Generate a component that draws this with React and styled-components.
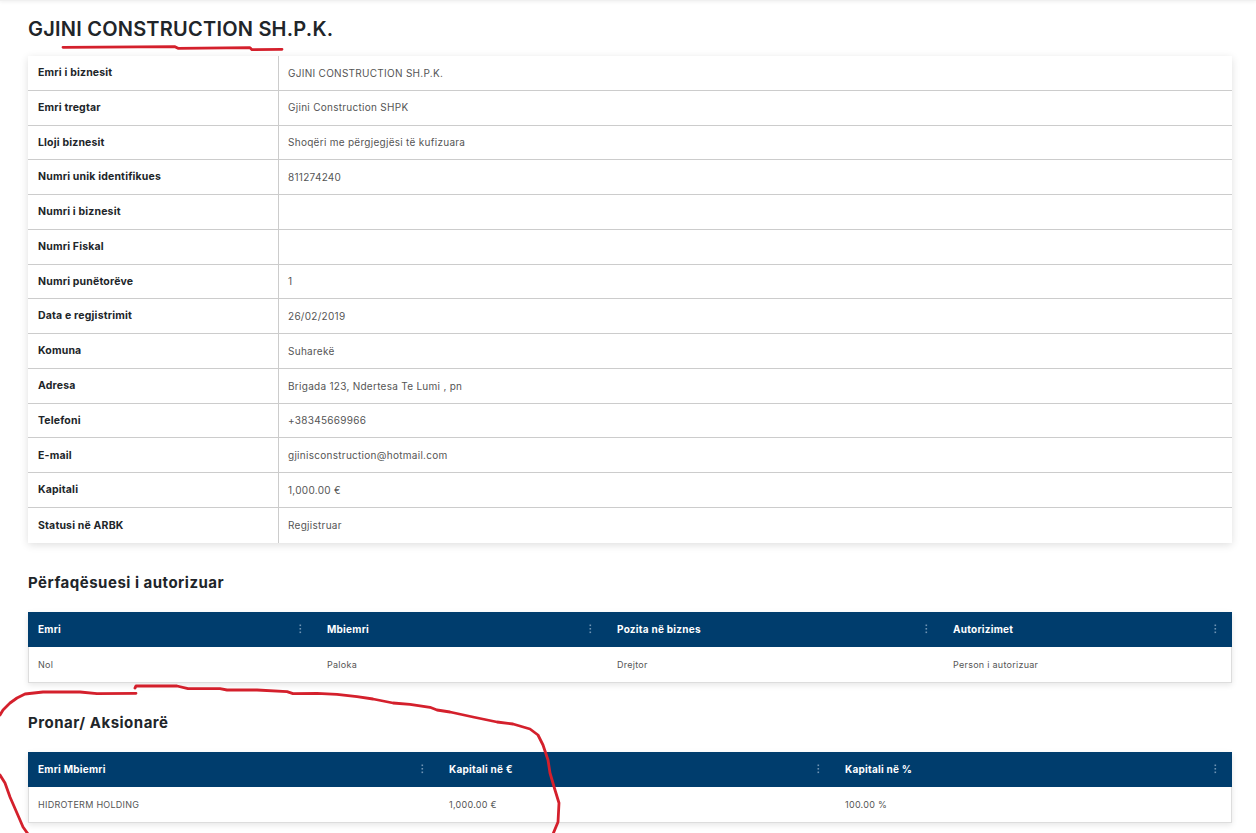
import styled, { createGlobalStyle } from "styled-components";

const details = [
  ["Emri i biznesit", "GJINI CONSTRUCTION SH.P.K."],
  ["Emri tregtar", "Gjini Construction SHPK"],
  ["Lloji biznesit", "Shoqëri me përgjegjësi të kufizuara"],
  ["Numri unik identifikues", "811274240"],
  ["Numri i biznesit", ""],
  ["Numri Fiskal", ""],
  ["Numri punëtorëve", "1"],
  ["Data e regjistrimit", "26/02/2019"],
  ["Komuna", "Suharekë"],
  ["Adresa", "Brigada 123, Ndertesa Te Lumi , pn"],
  ["Telefoni", "+38345669966"],
  ["E-mail", "gjinisconstruction@hotmail.com"],
  ["Kapitali", "1,000.00 €"],
  ["Statusi në ARBK", "Regjistruar"],
];

const representatives = {
  columns: "289px 290px 336px 289px",
  head: ["Emri", "Mbiemri", "Pozita në biznes", "Autorizimet"],
  row: ["Nol", "Paloka", "Drejtor", "Person i autorizuar"],
};

const owners = {
  columns: "411px 396px 397px",
  head: ["Emri Mbiemri", "Kapitali në €", "Kapitali në %"],
  row: ["HIDROTERM HOLDING", "1,000.00 €", "100.00 %"],
};

function DataGrid({ data }) {
  return (
    <GridCard>
      <GridRow $columns={data.columns} $head>
        {data.head.map((h) => (
          <HeadCell key={h}>
            {h}
            <Kebab width="3" height="10" viewBox="0 0 3 10">
              <rect x="0.5" y="0.5" width="1.6" height="1.6" />
              <rect x="0.5" y="4" width="1.6" height="1.6" />
              <rect x="0.5" y="7.5" width="1.6" height="1.6" />
            </Kebab>
          </HeadCell>
        ))}
      </GridRow>
      <GridRow $columns={data.columns}>
        {data.row.map((c) => (
          <BodyCell key={c}>{c}</BodyCell>
        ))}
      </GridRow>
    </GridCard>
  );
}

export default function App() {
  return (
    <>
      <GlobalStyle />
      <TopEdge />
      <Page>
        <Title>GJINI CONSTRUCTION SH.P.K.</Title>
        <DetailsCard>
          {details.map(([label, value]) => (
            <DetailRow key={label}>
              <DetailLabel>{label}</DetailLabel>
              <DetailValue>{value}</DetailValue>
            </DetailRow>
          ))}
        </DetailsCard>
        <SectionTitle>Përfaqësuesi i autorizuar</SectionTitle>
        <DataGrid data={representatives} />
        <SectionTitle>Pronar/ Aksionarë</SectionTitle>
        <DataGrid data={owners} />
      </Page>
      <Scribble viewBox="0 0 1256 833" width="1256" height="833" fill="none">
        <path d="M63 47.3 L175 46.7 L178 48.3 L250 47.7 L252 49.7 L282 49.3" />
        <path d="M0 715 L3 710 L10 703 L17 698 L25 694 L43 692 L80 692 L97 693.7 L136 693.3" />
        <path d="M135 688 L136 686 L177 686 L188 688.7 L220 688.7 L227 690 L257 690 L287 691.7 L293 693.7 L317 693.3 L337 694.3 L357 696.7 L373 699 L393 703 L410 704.3 L430 707.3 L437 710 L450 712 L473 717 L497 722 L513 724 L530 729 L538 735 L543 745 L548 760 L550 773 L555 790 L559 803 L558 822 L553 834" />
        <path d="M0 775 L5 783 L10 797 L20 820 L23 827 L28 834" />
      </Scribble>
    </>
  );
}

const GlobalStyle = createGlobalStyle`
  html, body {
    margin: 0;
    height: 833px;
    overflow: hidden;
    background: #fff;
  }
  body {
    font-family: "Inter", "Noto Sans", sans-serif;
  }
`;

const TopEdge = styled.div`
  height: 1px;
  background: #f0f0f0;
  box-shadow: 0 1px 3px rgba(0, 0, 0, 0.12);
`;

const Page = styled.main`
  padding: 0 24px 0 28px;
`;

const Title = styled.h1`
  margin: 0;
  padding-top: 17px;
  height: 38px;
  font-size: 20px;
  line-height: 22px;
  font-weight: 600;
  color: #212529;
  letter-spacing: 0.22px;
`;

const SectionTitle = styled.h2`
  margin: 0;
  height: 69px;
  padding-top: 31px;
  box-sizing: border-box;
  font-size: 15px;
  line-height: 18px;
  font-weight: 700;
  color: #212529;
  letter-spacing: 0.5px;
`;

const DetailsCard = styled.section`
  background: #fff;
  box-shadow: 0 2px 8px rgba(0, 0, 0, 0.13);
`;

const DetailRow = styled.div`
  display: grid;
  grid-template-columns: 251px 1fr;
  height: 34.78px;
  box-sizing: border-box;
  border-bottom: 1px solid #ccc;

  &:last-child {
    border-bottom: none;
  }
`;

const DetailLabel = styled.div`
  display: flex;
  align-items: center;
  padding: 0 0 0.5px 10px;
  border-right: 1px solid #ccc;
  font-size: 10.5px;
  font-weight: 700;
  letter-spacing: 0.17px;
  color: #212529;
`;

const DetailValue = styled.div`
  display: flex;
  align-items: center;
  padding: 0 0 0.5px 9px;
  font-size: 10px;
  letter-spacing: 0.28px;
  color: #555;
`;

const GridCard = styled.section`
  background: #fff;
  border: 1px solid #ddd;
  border-top: none;
  box-sizing: border-box;
  box-shadow: 0 2px 6px rgba(0, 0, 0, 0.1);
`;

const GridRow = styled.div`
  display: grid;
  grid-template-columns: ${(p) => p.$columns};
  height: 35px;
  margin: 0 -1px;
  background: ${(p) => (p.$head ? "#003d6d" : "transparent")};
`;

const HeadCell = styled.div`
  display: flex;
  align-items: center;
  justify-content: space-between;
  padding: 0 15px 0 10px;
  font-size: 10px;
  font-weight: 700;
  letter-spacing: 0.25px;
  color: #fff;
`;

const BodyCell = styled.div`
  display: flex;
  align-items: center;
  padding-left: 10px;
  font-size: 9px;
  letter-spacing: 0.27px;
  color: #555;
`;

const Kebab = styled.svg`
  fill: #6f94b4;
  flex: none;
`;

const Scribble = styled.svg`
  position: absolute;
  top: 0;
  left: 0;
  pointer-events: none;

  path {
    stroke: #d4202c;
    stroke-width: 2.8;
    stroke-linecap: round;
    stroke-linejoin: round;
  }
`;
